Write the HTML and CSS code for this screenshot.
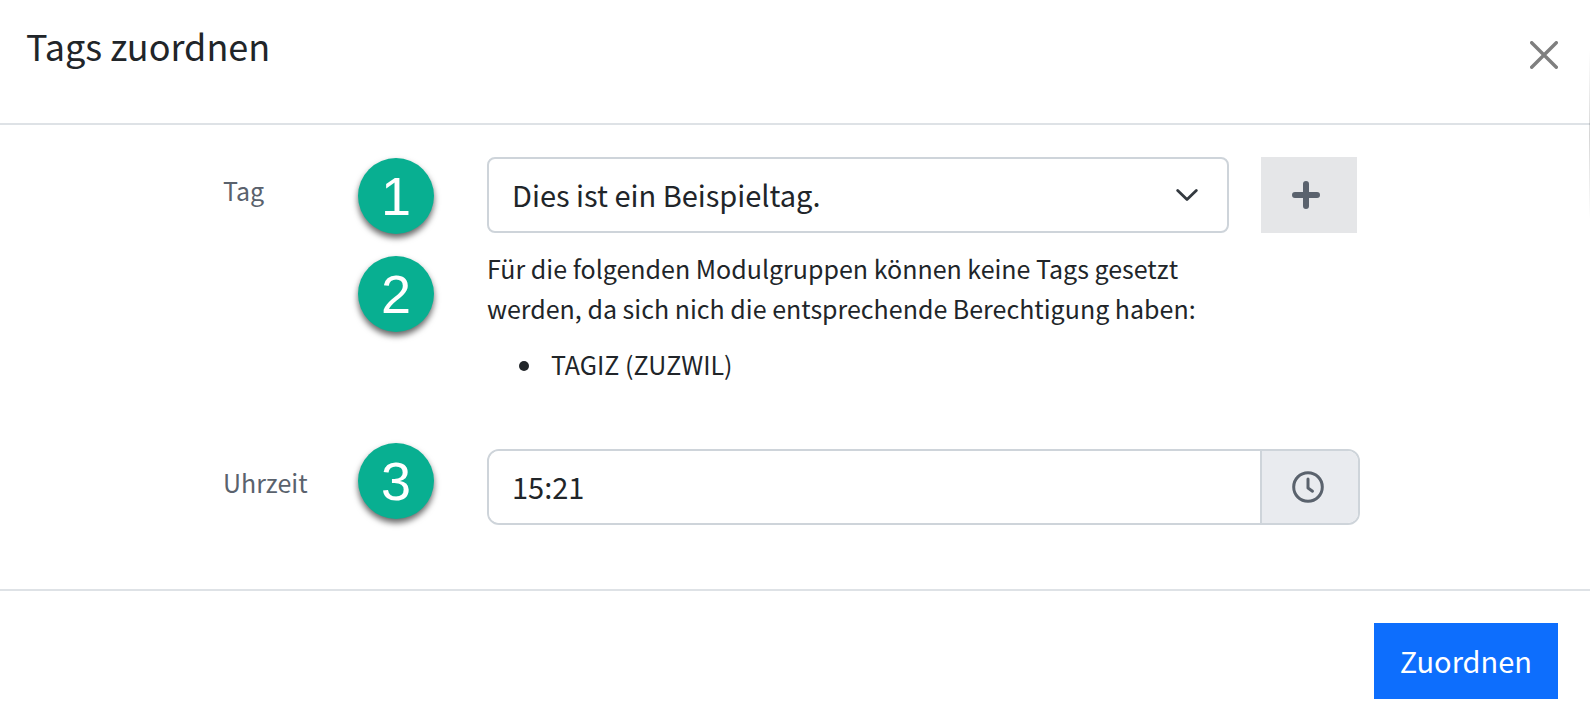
FILE: index.html
```
<!DOCTYPE html>
<html lang="de">
<head>
  <meta charset="utf-8">
  <meta content="width=device-width, initial-scale=1.0" name="viewport">
  <title>Tags zuordnen</title>
  <link rel="stylesheet" href="styles.css">
</head>
<body>
  <form class="modal">
    <header class="modal-header">
      <h1>Tags zuordnen</h1>
      <button type="button" class="close" aria-label="Schliessen">
        <svg viewBox="0 0 28 28" width="28" height="28"><path d="M1.7 1.7l24.6 24.6M26.3 1.7L1.7 26.3"/></svg>
      </button>
    </header>

    <div class="modal-body">
      <div class="row">
        <label for="tag">Tag</label>
        <span class="step step-1">1</span>
        <span class="step step-2">2</span>
        <div class="tag-field">
          <div class="select">
            <select id="tag">
              <option>Dies ist ein Beispieltag.</option>
            </select>
            <svg viewBox="0 0 22 12" width="22" height="12"><path d="M1.7 1.5l9.3 9 9.3-9"/></svg>
          </div>
          <button type="button" class="add" aria-label="Tag erfassen">
            <svg viewBox="0 0 28 28" width="28" height="28"><path d="M14 3v22M3 14h22"/></svg>
          </button>
          <div class="hint">
            <p>Für die folgenden Modulgruppen können keine Tags gesetzt werden, da sich nich die entsprechende Berechtigung haben:</p>
            <ul>
              <li>TAGIZ (ZUZWIL)</li>
            </ul>
          </div>
        </div>
      </div>

      <div class="row">
        <label for="time">Uhrzeit</label>
        <span class="step step-3">3</span>
        <div class="time-field">
          <input type="text" id="time" value="15:21">
          <button type="button" aria-label="Uhrzeit wählen">
            <svg viewBox="0 0 32 32" width="32" height="32">
              <circle cx="16" cy="16" r="14.3"/>
              <path d="M16 8v9l4.5 3.2"/>
            </svg>
          </button>
        </div>
      </div>
    </div>

    <footer class="modal-footer">
      <button type="submit" class="btn-primary">Zuordnen</button>
    </footer>
  </form>
</body>
</html>
```

FILE: styles.css
```
* {
  box-sizing: border-box;
}

body {
  margin: 0;
  overflow: hidden;
  background: #fff;
  color: #212529;
  font-family: "Noto Sans CJK SC", "Open Sans", sans-serif;
  font-size: 25px;
  line-height: 40px;
}

button, input, select {
  margin: 0;
  font-family: inherit;
  font-size: 29px;
  color: inherit;
}

button {
  padding: 0;
  border: 0;
  cursor: pointer;
}

svg {
  display: block;
  fill: none;
  stroke: currentColor;
  stroke-linecap: round;
  stroke-linejoin: round;
}

.modal {
  position: relative;
}

/* shadow of the page behind, along the right edge */
.modal:after {
  content: "";
  position: absolute;
  top: 50px;
  right: 0;
  width: 1px;
  height: 170px;
  background: linear-gradient(rgba(0, 0, 0, 0), rgba(0, 0, 0, 0.16), rgba(0, 0, 0, 0));
}

.modal-header {
  display: flex;
  align-items: flex-start;
  justify-content: space-between;
  padding: 15px 32px 48px 26px;
  border-bottom: 2px solid #dee2e6;
}

.modal-header h1 {
  margin: 0;
  font-size: 36px;
  font-weight: normal;
  line-height: 60px;
}

.close {
  margin-top: 26px;
  background: none;
  color: #7f7f7f;
  stroke-width: 3.4;
}

.modal-body {
  display: flex;
  flex-direction: column;
  gap: 64px;
  padding: 32px 230px 64px 223px;
}

.row {
  position: relative;
  display: grid;
  grid-template-columns: 264px 1fr;
  align-items: start;
}

.row label {
  padding-top: 13px;
  color: #5a626d;
}

/* numbered markers lying over the form */
.step {
  position: absolute;
  left: 135px;
  width: 76px;
  height: 76px;
  border-radius: 50%;
  background: #08af91;
  box-shadow: 0 4px 6px rgba(0, 0, 0, 0.6);
  color: #fff;
  font-family: "Liberation Sans", Arial, sans-serif;
  font-size: 54px;
  line-height: 76px;
  text-align: center;
}

.step-1 {
  top: 1px;
}

.step-2 {
  top: 99px;
}

.step-3 {
  top: -6px;
}

.tag-field {
  display: grid;
  grid-template-columns: 1fr 96px;
  gap: 15px 32px;
  padding-right: 3px;
}

.select {
  display: grid;
  align-items: center;
}

.select select, .select svg {
  grid-area: 1 / 1;
}

.select select {
  width: 100%;
  height: 76px;
  padding: 0 72px 2px 23px;
  border: 2px solid #ced4da;
  border-radius: 8px;
  background: #fff;
  appearance: none;
}

.select svg {
  justify-self: end;
  margin-right: 31px;
  color: #343a40;
  stroke-width: 2.8;
  pointer-events: none;
}

.add {
  padding-left: 31px;
  background: #e5e6e8;
  color: #5a626d;
  stroke-width: 6;
}

.hint p {
  margin: 0 0 16px;
}

.hint ul {
  margin: 0 0 1px;
  padding-left: 58px;
}

.hint li {
  padding-left: 6px;
}

.time-field {
  display: flex;
  height: 76px;
  border: 2px solid #ced4da;
  border-radius: 12px;
  overflow: hidden;
}

.time-field input {
  flex: 1;
  min-width: 0;
  padding: 0 23px 2px;
  border: 0;
  background: #fff;
}

.time-field button {
  width: 98px;
  padding-left: 30px;
  border-left: 2px solid #ced4da;
  background: #e9ebef;
  color: #5a626d;
  stroke-width: 3;
}

.modal-footer {
  display: flex;
  justify-content: flex-end;
  padding: 32px;
  border-top: 2px solid #dee2e6;
}

.btn-primary {
  height: 76px;
  padding: 0 26px 2px;
  background: #0d6efd;
  color: #fff;
}
```
